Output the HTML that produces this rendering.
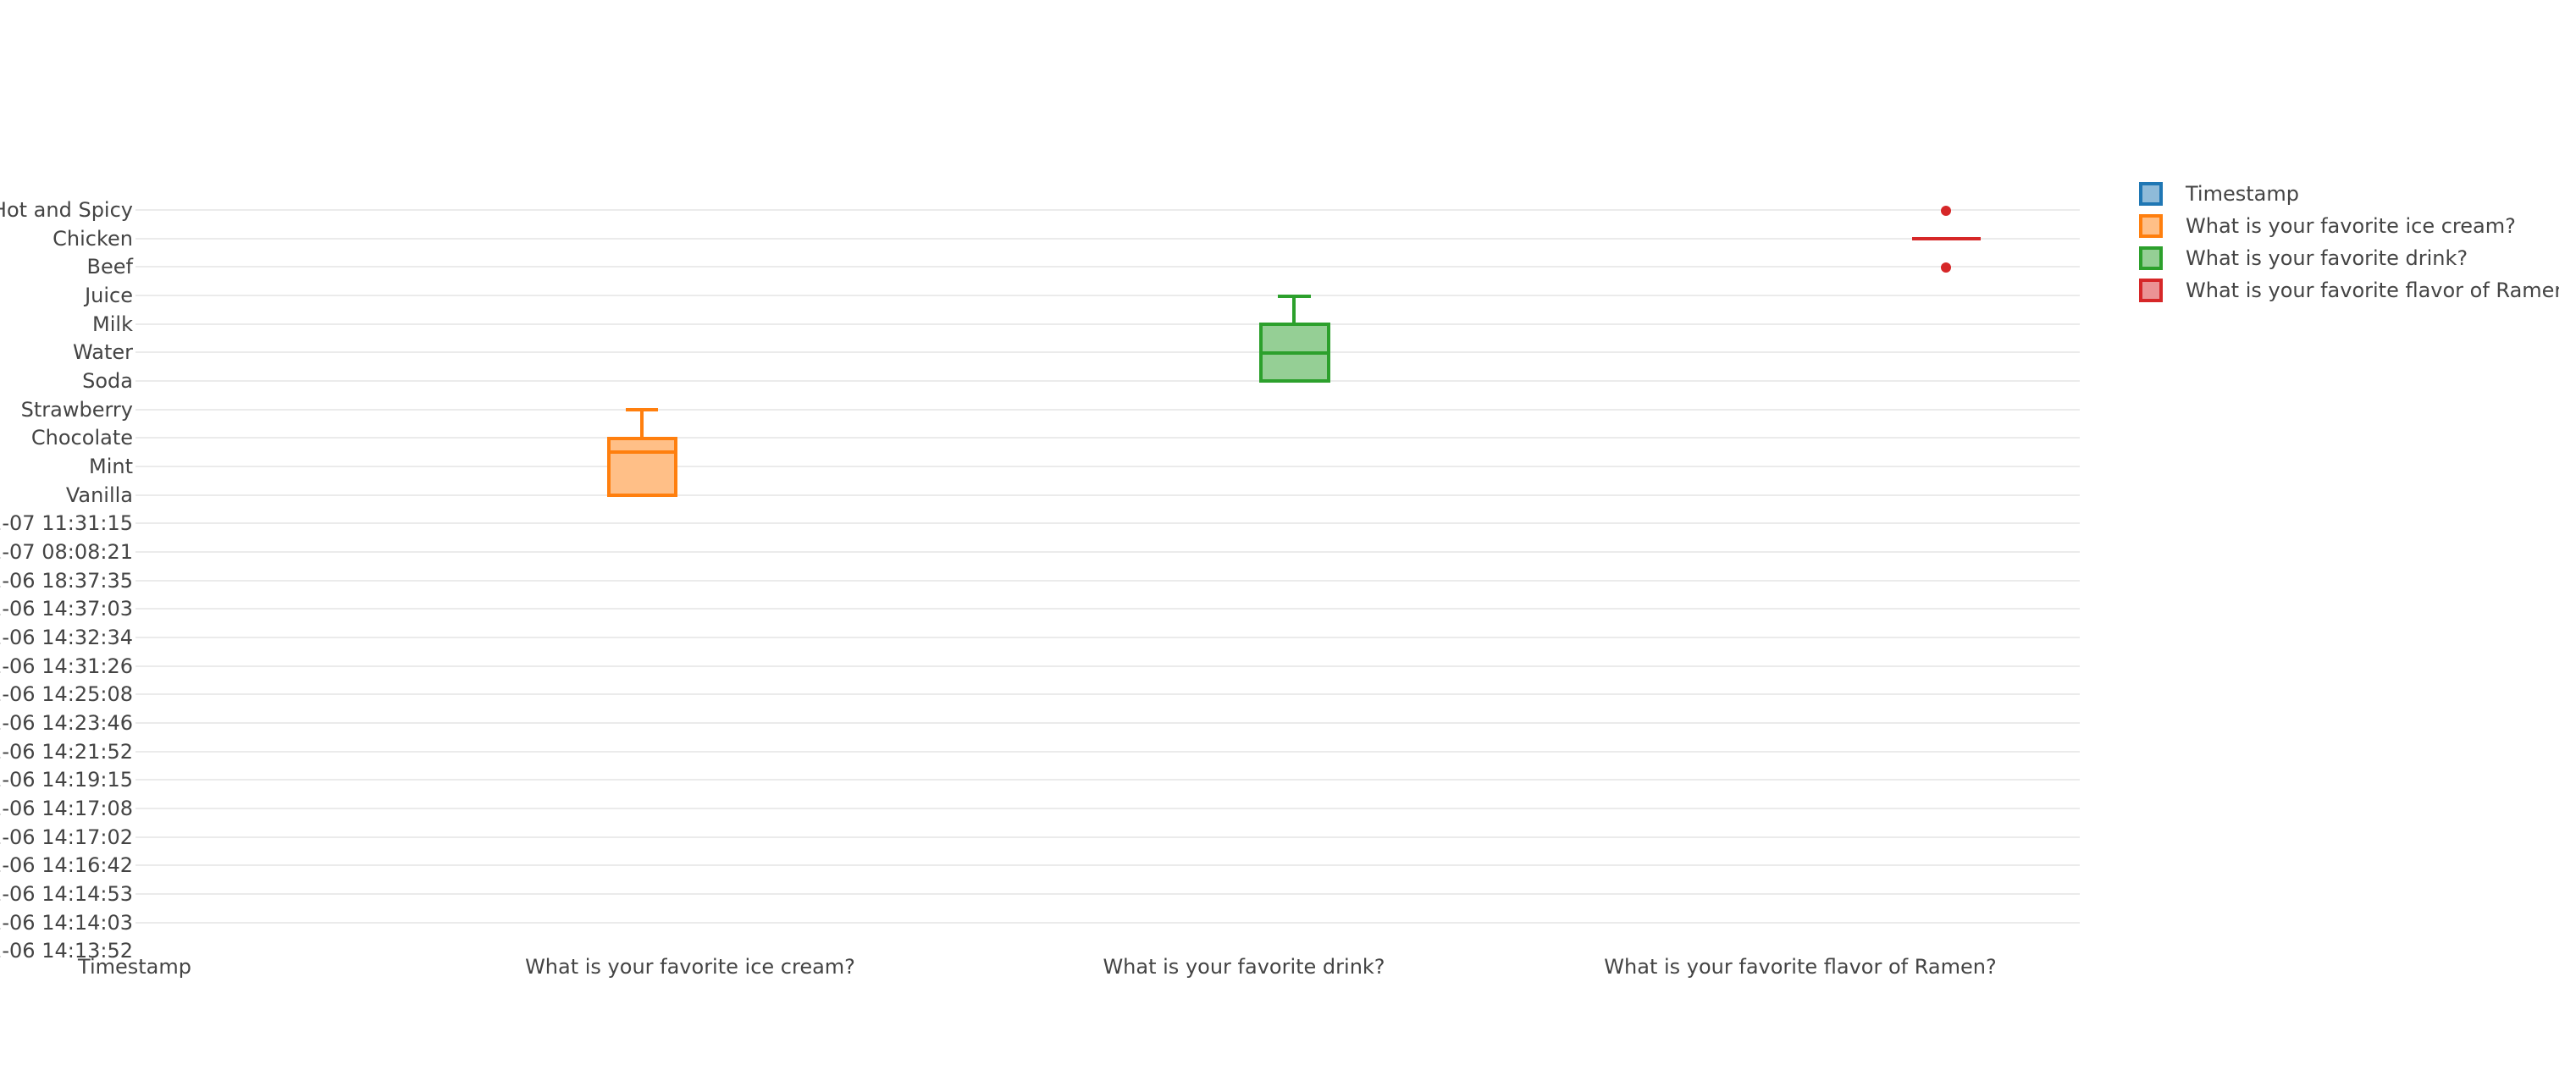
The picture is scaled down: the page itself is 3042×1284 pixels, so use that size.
<!DOCTYPE html>
<html><head><meta charset="utf-8"><style>
html,body{margin:0;padding:0;background:#fff;width:3042px;height:1284px;overflow:hidden}
text{font-family:"DejaVu Sans","Liberation Sans",sans-serif;font-size:24px;fill:#444}
</style></head><body>
<svg width="3042" height="1284" xmlns="http://www.w3.org/2000/svg">
<defs><clipPath id="lc"><rect x="2500" y="190" width="522" height="200"/></clipPath></defs>
<g stroke="#ebebeb" stroke-width="2">
<line x1="160" x2="2456" y1="248" y2="248"/><line x1="160" x2="2456" y1="282" y2="282"/><line x1="160" x2="2456" y1="315" y2="315"/><line x1="160" x2="2456" y1="349" y2="349"/><line x1="160" x2="2456" y1="383" y2="383"/><line x1="160" x2="2456" y1="416" y2="416"/><line x1="160" x2="2456" y1="450" y2="450"/><line x1="160" x2="2456" y1="484" y2="484"/><line x1="160" x2="2456" y1="517" y2="517"/><line x1="160" x2="2456" y1="551" y2="551"/><line x1="160" x2="2456" y1="585" y2="585"/><line x1="160" x2="2456" y1="618" y2="618"/><line x1="160" x2="2456" y1="652" y2="652"/><line x1="160" x2="2456" y1="686" y2="686"/><line x1="160" x2="2456" y1="719" y2="719"/><line x1="160" x2="2456" y1="753" y2="753"/><line x1="160" x2="2456" y1="787" y2="787"/><line x1="160" x2="2456" y1="820" y2="820"/><line x1="160" x2="2456" y1="854" y2="854"/><line x1="160" x2="2456" y1="888" y2="888"/><line x1="160" x2="2456" y1="921" y2="921"/><line x1="160" x2="2456" y1="955" y2="955"/><line x1="160" x2="2456" y1="989" y2="989"/><line x1="160" x2="2456" y1="1022" y2="1022"/><line x1="160" x2="2456" y1="1056" y2="1056"/><line x1="160" x2="2456" y1="1090" y2="1090"/>
</g>
<g text-anchor="end">
<text x="157" y="256">Hot and Spicy</text>
<text x="157" y="290">Chicken</text>
<text x="157" y="323">Beef</text>
<text x="157" y="357">Juice</text>
<text x="157" y="391">Milk</text>
<text x="157" y="424">Water</text>
<text x="157" y="458">Soda</text>
<text x="157" y="492">Strawberry</text>
<text x="157" y="525">Chocolate</text>
<text x="157" y="559">Mint</text>
<text x="157" y="593">Vanilla</text>
<text x="157" y="626">2023-01-07 11:31:15</text>
<text x="157" y="660">2023-01-07 08:08:21</text>
<text x="157" y="694">2023-01-06 18:37:35</text>
<text x="157" y="727">2023-01-06 14:37:03</text>
<text x="157" y="761">2023-01-06 14:32:34</text>
<text x="157" y="795">2023-01-06 14:31:26</text>
<text x="157" y="828">2023-01-06 14:25:08</text>
<text x="157" y="862">2023-01-06 14:23:46</text>
<text x="157" y="896">2023-01-06 14:21:52</text>
<text x="157" y="929">2023-01-06 14:19:15</text>
<text x="157" y="963">2023-01-06 14:17:08</text>
<text x="157" y="997">2023-01-06 14:17:02</text>
<text x="157" y="1030">2023-01-06 14:16:42</text>
<text x="157" y="1064">2023-01-06 14:14:53</text>
<text x="157" y="1098">2023-01-06 14:14:03</text>
<text x="157" y="1131">2023-01-06 14:13:52</text>
</g>
<g text-anchor="middle">
<text x="159" y="1150">Timestamp</text>
<text x="815" y="1150">What is your favorite ice cream?</text>
<text x="1469" y="1150">What is your favorite drink?</text>
<text x="2126" y="1150">What is your favorite flavor of Ramen?</text>
</g>
<g stroke="#ff7f0e" stroke-width="4" fill="none">
<rect x="719" y="518" width="79" height="67" fill="#ffbf87"/>
<line x1="719" x2="798" y1="534" y2="534"/>
<line x1="758" x2="758" y1="518" y2="484"/>
<line x1="739" x2="777" y1="484" y2="484"/>
</g>
<g stroke="#2ca02c" stroke-width="4" fill="none">
<rect x="1489" y="383" width="80" height="67" fill="#95cf95"/>
<line x1="1489" x2="1569" y1="417" y2="417"/>
<line x1="1528" x2="1528" y1="383" y2="350"/>
<line x1="1509" x2="1548" y1="350" y2="350"/>
</g>
<line x1="2258" x2="2339" y1="282" y2="282" stroke="#d62728" stroke-width="4"/>
<circle cx="2298" cy="249" r="6" fill="#d62728"/>
<circle cx="2298" cy="316" r="6" fill="#d62728"/>
<g clip-path="url(#lc)">
<g stroke-width="4">
<rect x="2528" y="217" width="24" height="24" fill="#8fbbd9" stroke="#1f77b4"/>
<rect x="2528" y="255" width="24" height="24" fill="#ffbf87" stroke="#ff7f0e"/>
<rect x="2528" y="293" width="24" height="24" fill="#95cf95" stroke="#2ca02c"/>
<rect x="2528" y="331" width="24" height="24" fill="#eb9394" stroke="#d62728"/>
</g>
<text x="2581" y="237">Timestamp</text>
<text x="2581" y="275">What is your favorite ice cream?</text>
<text x="2581" y="313">What is your favorite drink?</text>
<text x="2581" y="351">What is your favorite flavor of Ramen?</text>
</g>
</svg>
</body></html>
